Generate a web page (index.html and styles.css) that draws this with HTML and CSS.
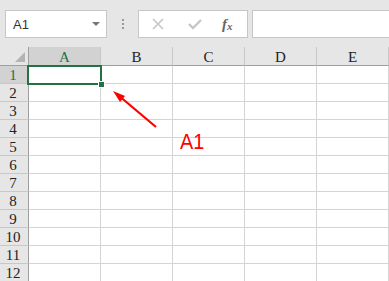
FILE: index.html
```html
<!DOCTYPE html>
<html lang="en">
<head>
    <meta charset="UTF-8">
    <title>Sheet - A1</title>
    <link rel="stylesheet" href="styles.css">
</head>
<body>
    <!-- Formula bar -->
    <div class="toolbar">
        <div class="name-box">
            <span>A1</span>
            <span class="caret"></span>
        </div>
        <div class="grip"><i></i><i></i><i></i></div>
        <div class="fx-box">
            <svg width="12" height="12" viewBox="0 0 12 12"><path d="M1 1 L11 11 M11 1 L1 11" stroke="#c6c6c6" stroke-width="1.6" fill="none"/></svg>
            <svg width="14" height="12" viewBox="0 0 14 12"><path d="M1 6 L5 10 L13 2" stroke="#c6c6c6" stroke-width="2.4" fill="none"/></svg>
            <span class="fx">f<sub>x</sub></span>
        </div>
        <div class="formula"></div>
    </div>

    <!-- Grid -->
    <div class="sheet">
        <div class="grid" id="grid"></div>
        <div class="selection"><span class="handle"></span></div>
        <svg class="arrow" width="50" height="45" viewBox="0 0 50 45">
            <path d="M45 39 L7 7" stroke="#ff0000" stroke-width="2.2" fill="none"/>
            <path d="M2 3 L14 8 L9 14 Z" fill="#ff0000"/>
        </svg>
        <div class="note">A1</div>
    </div>

<script>
    const cols = ["A", "B", "C", "D", "E"];
    const grid = document.getElementById("grid");

    function cell(cls, text) {
        const d = document.createElement("div");
        d.className = cls;
        d.textContent = text || "";
        grid.appendChild(d);
    }

    cell("corner");
    cols.forEach(c => cell(c === "A" ? "col-head active" : "col-head", c));
    for (let r = 1; r <= 12; r++) {
        cell(r === 1 ? "row-head active" : "row-head", r);
        cols.forEach(() => cell("cell"));
    }
</script>
</body>
</html>
```
FILE: styles.css
```css
* {
    margin: 0;
    padding: 0;
    box-sizing: border-box;
}

body {
    width: 389px;
    height: 281px;
    overflow: hidden;
    background: #fff;
    font-family: "Liberation Sans", Arial, sans-serif;
}

.toolbar {
    height: 47px;
    background: #e6e6e6;
    display: flex;
    align-items: flex-start;
    padding: 10px 0 0 5px;
}

.name-box {
    width: 102px;
    height: 28px;
    background: #fff;
    border: 1px solid #c6c6c6;
    display: flex;
    align-items: center;
    justify-content: space-between;
    padding: 0 6px 0 7px;
    font-size: 13px;
    color: #333;
}

.caret {
    width: 0;
    height: 0;
    border-left: 4px solid transparent;
    border-right: 4px solid transparent;
    border-top: 4px solid #777;
}

.grip {
    width: 31px;
    height: 28px;
    display: flex;
    flex-direction: column;
    align-items: center;
    justify-content: center;
    gap: 2px;
}

.grip i {
    width: 2px;
    height: 2px;
    background: #999;
}

.fx-box {
    width: 110px;
    height: 28px;
    background: #fff;
    border: 1px solid #c6c6c6;
    display: flex;
    align-items: center;
    padding: 0 0 0 13px;
}

.fx-box svg:first-child { margin-right: 24px; }
.fx-box svg:nth-child(2) { margin-right: 20px; }

.fx {
    font-family: "Liberation Serif", serif;
    font-style: italic;
    font-weight: bold;
    font-size: 15px;
    color: #666;
}

.fx sub {
    font-size: 11px;
    vertical-align: -1px;
}

.formula {
    flex: 1;
    height: 28px;
    margin-left: 4px;
    background: #fff;
    border: 1px solid #c6c6c6;
    border-right: none;
}

.sheet {
    position: relative;
}

.grid {
    display: grid;
    grid-template-columns: 29px repeat(5, 72px);
    grid-template-rows: 19px repeat(12, 18px);
    font-family: "Liberation Serif", "DejaVu Serif", serif;
    font-size: 15px;
    color: #222;
}

.corner {
    background: #e6e6e6;
    border-right: 1px solid #9f9f9f;
    border-bottom: 1px solid #9f9f9f;
    position: relative;
}

.corner::after {
    content: "";
    position: absolute;
    right: 3px;
    bottom: 3px;
    border-left: 10px solid transparent;
    border-bottom: 10px solid #b4b4b4;
}

.col-head {
    background: #e6e6e6;
    border-right: 1px solid #c8c8c8;
    border-bottom: 1px solid #9f9f9f;
    text-align: center;
    line-height: 20px;
}

.row-head {
    background: #e6e6e6;
    border-right: 1px solid #9f9f9f;
    border-bottom: 1px solid #c8c8c8;
    text-align: center;
    line-height: 18px;
    padding-right: 2px;
}

.active {
    background: #d2d2d2;
    color: #217346;
}

.cell {
    border-right: 1px solid #d4d4d4;
    border-bottom: 1px solid #d4d4d4;
}

.selection {
    position: absolute;
    left: 27px;
    top: 18px;
    width: 75px;
    height: 20px;
    border: 2px solid #217346;
}

.handle {
    position: absolute;
    right: -5px;
    bottom: -5px;
    width: 7px;
    height: 7px;
    background: #217346;
    border: 1px solid #fff;
}

.arrow {
    position: absolute;
    left: 111px;
    top: 41px;
}

.note {
    position: absolute;
    left: 180px;
    top: 82px;
    font-family: "Liberation Sans", Arial, sans-serif;
    font-size: 22px;
    color: #ff0000;
    transform: scaleX(0.9);
    transform-origin: left;
}
```
